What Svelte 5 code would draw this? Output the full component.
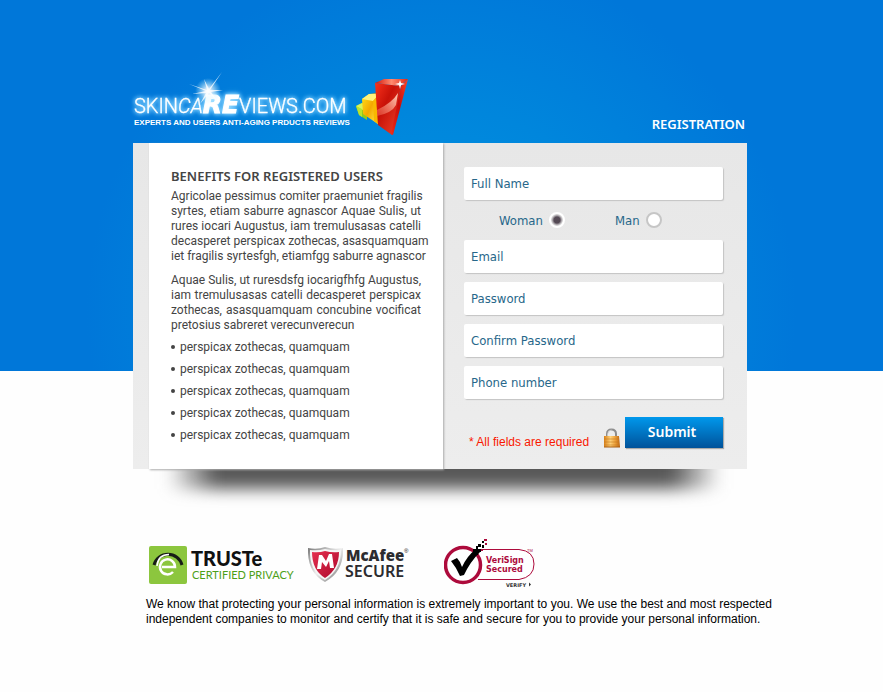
<script>
  const intro = [
    'Agricolae pessimus comiter praemuniet fragilis',
    'syrtes, etiam saburre agnascor Aquae Sulis, ut',
    'rures iocari Augustus, iam tremulusasas catelli',
    'decasperet perspicax zothecas, asasquamquam',
    'iet fragilis syrtesfgh, etiamfgg saburre agnascor'
  ];
  const details = [
    'Aquae Sulis, ut ruresdsfg iocarigfhfg Augustus,',
    'iam tremulusasas catelli decasperet perspicax',
    'zothecas, asasquamquam concubine vocificat',
    'pretosius sabreret verecunverecun'
  ];
  const benefits = Array(5).fill('perspicax zothecas, quamquam');
  const fields = [
    { id: 'email', label: 'Email', type: 'email' },
    { id: 'password', label: 'Password', type: 'password' },
    { id: 'confirm', label: 'Confirm Password', type: 'password' },
    { id: 'phone', label: 'Phone number', type: 'tel' }
  ];
  let gender = $state('woman');
</script>

<div class="page">
  <header>
    <svg class="logo" width="280" height="70" viewBox="0 0 280 70" role="img" aria-label="SkinCareViews.com">
      <defs>
        <radialGradient id="flare"><stop offset="0" stop-color="#fff" /><stop offset=".25" stop-color="#fff" stop-opacity=".8" /><stop offset="1" stop-color="#bff0ff" stop-opacity="0" /></radialGradient>
        <linearGradient id="redFront" x1="0" y1="0" x2="1" y2="1"><stop offset="0" stop-color="#f8321c" /><stop offset=".4" stop-color="#c81208" /><stop offset="1" stop-color="#f0452c" /></linearGradient>
        <linearGradient id="redSide" x1="1" y1="0" x2="0" y2="1"><stop offset="0" stop-color="#ff4526" /><stop offset=".5" stop-color="#c90c08" /><stop offset="1" stop-color="#f02a16" /></linearGradient>
        <linearGradient id="redTop"><stop offset="0" stop-color="#d3150b" /><stop offset=".5" stop-color="#ff8b6f" /><stop offset="1" stop-color="#e02413" /></linearGradient>
        <linearGradient id="gloss" x1="1" y1="0" x2="0" y2="1"><stop offset="0" stop-color="#ffd4bd" /><stop offset="1" stop-color="#f0604a" stop-opacity=".5" /></linearGradient>
        <linearGradient id="gold" x1="0" y1="0" x2="1" y2="1"><stop offset="0" stop-color="#ffe51c" /><stop offset=".5" stop-color="#f5a800" /><stop offset="1" stop-color="#fff04a" /></linearGradient>
      </defs>
      <text class="word" x="1" y="40">SKIN<tspan class="slant">CA</tspan><tspan class="wide">RE</tspan>VIEWS.COM</text>
      <g transform="translate(0 -3)">
        <circle cx="75" cy="21" r="13" fill="url(#flare)" />
        <path d="M56 14 74 20 71 9 76 19 89 2 77 20 90 20 78 22 85 32 76 23 67 34 73 23 59 24 73 21z" fill="#fff" opacity=".8" />
      </g>
      <text class="tagline" x="1" y="52">EXPERTS AND USERS ANTI-AGING PRDUCTS REVIEWS</text>
      <g>
        <path d="M223 33 229 30 234 33V47L226 42z" fill="#8fca1e" />
        <path d="M223 33 229 30 235 34 229 37z" fill="#d8f45b" />
        <path d="M229 36V44L226 42 223 33z" fill="#b9e32e" />
        <path d="M229 26 236 21 245 20V51L230 41z" fill="url(#gold)" />
        <path d="M229 26 236 21 246 21 240 28z" fill="#fff37c" />
        <path d="M240 28 246 23V52L241 48z" fill="#f9b800" />
        <path d="M242 10 268 13 259 62 245 52z" fill="url(#redFront)" />
        <path d="M268 13 275 6 260 62 258 61z" fill="url(#redSide)" />
        <path d="M242 10 251 6H275L267 13z" fill="url(#redTop)" />
        <path d="M244 37Q259 30 265 20L263 32Q259 40 244 43z" fill="url(#gloss)" />
        <path d="M267 7 268 10 272 11 268 12 267 16 266 12 262 11 266 10z" fill="#fff" />
      </g>
    </svg>
    <h1>REGISTRATION</h1>
  </header>

  <main>
    <section class="benefits">
      <h2>BENEFITS FOR REGISTERED USERS</h2>
      <p class="full">{#each intro as line}<span>{line}</span>{/each}</p>
      <p>{#each details as line}<span>{line}</span>{/each}</p>
      <ul>
        {#each benefits as item}<li>{item}</li>{/each}
      </ul>
    </section>

    <form onsubmit={(e) => e.preventDefault()}>
      <label class="field" for="name"><span>Full Name</span><input id="name" type="text" required /></label>
      <div class="gender">
        <label>Woman <input type="radio" name="gender" value="woman" bind:group={gender} /></label>
        <label>Man <input type="radio" name="gender" value="man" bind:group={gender} /></label>
      </div>
      {#each fields as f}
        <label class="field" for={f.id}><span>{f.label}</span><input id={f.id} type={f.type} required /></label>
      {/each}
      <div class="actions">
        <p class="note">* All fields are required</p>
        <svg width="18" height="20" viewBox="0 0 18 20" aria-hidden="true">
          <defs><linearGradient id="brass"><stop offset="0" stop-color="#d98018" /><stop offset=".4" stop-color="#ffd27a" /><stop offset=".7" stop-color="#eda03a" /><stop offset="1" stop-color="#bd6510" /></linearGradient></defs>
          <path d="M4 9V6Q4 1.500 8.500 1.500T13 6V9" fill="none" stroke="#8d8d8d" stroke-width="2" />
          <path d="M4.500 8V6Q5 2 8.500 2" fill="none" stroke="#ddd" stroke-width=".7" />
          <path d="M1 8H16L17 19H1z" fill="url(#brass)" />
          <path d="M1 11H16M1 14H16M1 17H16" stroke="#c57a20" stroke-width=".6" />
          <path d="M1 19H17" stroke="#a85c10" />
        </svg>
        <button type="submit">Submit</button>
      </div>
    </form>
  </main>

  <footer>
    <div class="seals">
      <svg width="147" height="50" viewBox="0 0 147 50" role="img" aria-label="TRUSTe Certified Privacy">
        <rect y="7" width="38" height="38" rx="2" fill="#8cc63e" />
        <path d="M5 26A14.500 14.500 0 0 1 33 26" fill="none" stroke="#171c17" stroke-width="3" />
        <path d="M13 28H26A7.500 7.500 0 1 0 24 33" fill="none" stroke="#fff" stroke-width="2.500" />
        <path d="M8 27Q9 15.500 20 15.500" fill="none" stroke="#fff" stroke-width="1.500" />
        <text class="truste" x="42" y="27">TRUSTe</text>
        <text class="certified" x="43" y="40">CERTIFIED PRIVACY</text>
      </svg>
      <svg width="102" height="50" viewBox="0 0 102 50" role="img" aria-label="McAfee Secure">
        <defs>
          <linearGradient id="steel" x2="1" y2="1"><stop offset="0" stop-color="#777" /><stop offset=".5" stop-color="#eee" /><stop offset="1" stop-color="#666" /></linearGradient>
          <linearGradient id="crimson" x2="1" y2="1"><stop offset="0" stop-color="#e5304f" /><stop offset="1" stop-color="#ad082c" /></linearGradient>
        </defs>
        <path d="M0 9Q9 11 17 8Q26 11 35 9Q36 33 17 43Q-1 34 0 9z" fill="url(#steel)" />
        <path d="M2 11Q10 12 17 10Q25 12 33 11Q33 31 17 41Q1 32 2 11z" fill="#f5f5f5" />
        <path d="M4 13Q11 14 17 12Q24 14 31 13Q31 30 17 39Q4 31 4 13z" fill="url(#crimson)" />
        <path d="M9 30 11 16H14L18 22 21 15H24L26 29H22L21 22 18 28 14 23 13 30z" fill="#fff" />
        <text class="mcafee" x="38" y="22">McAfee</text>
        <text class="reg" x="96" y="14">®</text>
        <text class="secure" x="37" y="38">SECURE</text>
      </svg>
      <svg width="92" height="50" viewBox="0 0 92 50" role="img" aria-label="VeriSign Secured">
        <path d="M34 10.500H75Q90 12 90 25T75 40.500H34" fill="#fff" stroke="#ad0b3c" />
        <circle cx="19" cy="26" r="17.500" fill="#fff" stroke="#ad0b3c" stroke-width="3.500" />
        <path d="M7 22 13 19Q16 22 18 28 23 17 32 10L36 13Q26 23 20 36L16 37Q12 28 7 22z" fill="#000" />
        <path d="M29 10H32V7H34V10H37V13H34V16H31V13H29zM34 5H37V8H34zM38 6H40V9H38zM38 2H40V4H38z" fill="#000" />
        <path d="M40 0H43V2H40zM41 4H43V6H41zM37 10H39V12H37z" fill="#ad0b3c" />
        <text class="veri" x="42" y="24">VeriSign</text>
        <text class="veri" x="42" y="33">Secured</text>
        <text class="tm" x="83" y="13">TM</text>
        <text class="verify" x="62" y="48">VERIFY</text>
        <path d="M85 43.500 87 45.500 85 47.500z" fill="#333" />
      </svg>
    </div>
    <p>We know that protecting your personal information is extremely important to you. We use the best and most respected <br />independent companies to monitor and certify that it is safe and secure for you to provide your personal information.</p>
  </footer>
</div>

<style>
  :global(body) {
    margin: 0;
    background: #fefefe;
  }
  * {
    box-sizing: border-box;
  }
  .page {
    position: relative;
    z-index: 0;
    min-height: 100vh;
    padding: 0 3px 48px 0;
    font-family: Roboto, 'Noto Sans', sans-serif;
    font-size: 12px;
    line-height: 15px;
    background: radial-gradient(circle at 50% 310px, #0096e3 0, #0086dc 200px, #0077d9 355px) no-repeat 0 0 / 100% 371px;
  }
  header,
  main,
  footer {
    width: 100%;
    max-width: 614px;
    margin: 0 auto;
  }
  header {
    height: 143px;
    display: flex;
    justify-content: space-between;
    align-items: flex-end;
    padding: 0 2px 0 0;
  }
  .logo {
    overflow: visible;
  }
  h1,
  h2,
  p,
  ul {
    margin: 0;
    padding: 0;
  }
  h1,
  h2,
  button {
    font-family: 'Noto Sans', sans-serif;
    font-weight: 600;
  }
  h1 {
    font-size: 13px;
    line-height: 18px;
    color: #fff;
    padding-bottom: 10px;
  }
  .word {
    font: 300 20px Roboto, sans-serif;
    fill: #fff;
    stroke: #fff;
    stroke-width: 0.3px;
    filter: drop-shadow(0 0 2px #a5e0ff) drop-shadow(0 0 2px #5cc2ff);
  }
  .slant {
    font-style: italic;
  }
  .wide {
    font: italic bold 25px 'DejaVu Sans', sans-serif;
    stroke-width: 1px;
  }
  .tagline {
    font: bold 8px 'Liberation Sans', sans-serif;
    fill: #fff;
  }
  main {
    position: relative;
    display: grid;
    grid-template-columns: minmax(0, 294fr) minmax(0, 304fr);
    padding-left: 16px;
    background: linear-gradient(#e7e7e7, #ededed);
  }
  main::before {
    content: '';
    position: absolute;
    z-index: -1;
    left: 34px;
    right: 26px;
    bottom: -20px;
    height: 44px;
    background: linear-gradient(90deg, transparent, #585858 50px, #585858 calc(100% - 50px), transparent);
    filter: blur(8px);
  }
  .benefits {
    padding: 24px 0 23px 22px;
    background: #fff;
    color: #444;
    box-shadow: 1px 1px 2px #aaa;
  }
  h2 {
    font-size: 13px;
    line-height: 18px;
    margin-bottom: 4px;
    white-space: nowrap;
  }
  .benefits p {
    width: 250px;
    margin-bottom: 9px;
  }
  .benefits span {
    display: block;
    white-space: nowrap;
    text-align-last: justify;
  }
  .benefits p:not(.full) span:last-child {
    text-align-last: left;
  }
  ul {
    list-style: none;
    line-height: 22px;
    margin-top: -6px;
  }
  li::before {
    content: '';
    display: inline-block;
    width: 4px;
    height: 4px;
    margin: 0 5px 2px 0;
    border-radius: 50%;
    background: #444;
  }
  form {
    display: flex;
    flex-direction: column;
    gap: 9px;
    padding: 24px 24px 21px 21px;
    font-family: 'DejaVu Sans Condensed', 'Noto Sans', sans-serif;
    font-size: 13px;
    color: #27678a;
  }
  .field {
    display: flex;
    align-items: center;
    gap: 8px;
    height: 33px;
    padding: 0 7px;
    background: #fff;
    border-radius: 2px;
    box-shadow: 1px 1px 1px #c4c4c4;
  }
  .field span {
    white-space: nowrap;
  }
  .field input {
    flex: 1;
    min-width: 0;
    border: 0;
    outline: 0;
    padding: 0;
    font: inherit;
    color: inherit;
    background: none;
  }
  .gender {
    display: flex;
    gap: 50px;
    height: 22px;
    padding-left: 35px;
  }
  .gender label {
    display: flex;
    align-items: center;
    gap: 6px;
  }
  .gender input {
    appearance: none;
    width: 16px;
    height: 16px;
    margin: 0;
    border: 2px solid #c6c6c6;
    border-radius: 50%;
    background: #fff;
  }
  .gender input:checked {
    border-color: #fff;
    background: radial-gradient(circle, #554a55 3px, #c4c1c4 5px, #ddd 6px);
  }
  .actions {
    display: flex;
    align-items: flex-end;
    padding: 9px 0 0 5px;
  }
  .note {
    font: 12px/12px 'Liberation Sans', sans-serif;
    color: #f91800;
    margin-right: auto;
    white-space: nowrap;
  }
  .actions svg {
    margin-right: 4px;
  }
  button {
    width: 98px;
    height: 31px;
    padding: 0 4px 3px 0;
    border: 0;
    font-size: 14px;
    color: #fff;
    background: linear-gradient(#0098ec, #00529a);
    box-shadow: 1px 1px 1px #aaa;
  }
  footer {
    padding: 70px 0 0 13px;
  }
  .seals {
    display: flex;
    padding-left: 3px;
    margin-bottom: 8px;
  }
  .seals svg:nth-child(2) {
    margin: 0 34px 0 12px;
  }
  footer p {
    font: 12px/15px 'Liberation Sans', sans-serif;
    color: #000;
    white-space: nowrap;
  }
  .truste {
    font: 900 20px Lato, sans-serif;
    fill: #111;
  }
  .certified {
    font: 11px Lato, sans-serif;
    fill: #4ca018;
  }
  .mcafee {
    font: 800 15px 'Open Sans', sans-serif;
    fill: #2c2c30;
  }
  .secure {
    font: 600 16px 'Noto Sans', sans-serif;
    fill: #2c2c30;
  }
  .reg {
    font: 6px 'Liberation Sans', sans-serif;
  }
  .veri {
    font: bold 8px 'DejaVu Sans', sans-serif;
    fill: #ad0b3c;
  }
  .tm {
    font: 4px 'Liberation Sans', sans-serif;
    fill: #ad0b3c;
  }
  .verify {
    font: bold 5px 'DejaVu Sans', sans-serif;
    fill: #333;
  }
</style>
